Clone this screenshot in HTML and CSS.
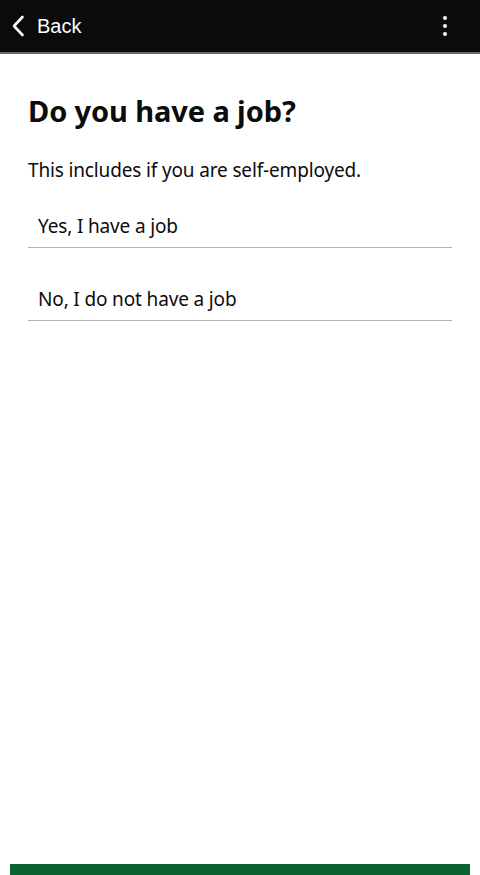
FILE: index.html
```html
<!DOCTYPE html>
<html lang="en-GB">
<head>
  <meta charset="UTF-8">
  <title>Do you have a job?</title>
  <link rel="stylesheet" href="styles.css">
</head>
<body>
  <header class="topbar">
    <a class="back" href="#">
      <svg class="chevron" width="14" height="22" viewBox="0 0 14 22">
        <path d="M11.5 2 L3 11 L11.5 20" fill="none" stroke="#fff" stroke-width="2.6" stroke-linecap="round" stroke-linejoin="round"/>
      </svg>
      <span>Back</span>
    </a>
    <div class="menu">
      <span></span><span></span><span></span>
    </div>
  </header>

  <main class="page">
    <h1>Do you have a job?</h1>
    <p class="hint">This includes if you are self-employed.</p>

    <div class="options">
      <a class="option" href="#">Yes, I have a job</a>
      <a class="option" href="#">No, I do not have a job</a>
    </div>
  </main>

  <div class="footer-bar"></div>
</body>
</html>
```

FILE: styles.css
```css
body {
  margin: 0;
  background: #fff;
  color: #0b0c0c;
  font-family: "Noto Sans", "Liberation Sans", sans-serif;
  min-height: 875px;
  display: flex;
  flex-direction: column;
}

.topbar {
  height: 52px;
  background: #0b0b0b;
  border-bottom: 2px solid #6b6b6b;
  display: flex;
  align-items: center;
  justify-content: space-between;
  padding: 0 33px 0 11px;
}

.back {
  display: flex;
  align-items: center;
  gap: 12px;
  color: #fff;
  text-decoration: none;
  font-family: "Liberation Sans", Arial, sans-serif;
  font-size: 20px;
}

.chevron {
  display: block;
}

.menu {
  display: flex;
  flex-direction: column;
  gap: 4px;
}

.menu span {
  width: 4px;
  height: 4px;
  border-radius: 50%;
  background: #fff;
}

.page {
  flex: 1;
  padding: 0 28px;
}

h1 {
  margin: 40px 0 0;
  font-size: 29px;
  font-weight: 700;
  letter-spacing: -0.1px;
  line-height: 1.2;
}

.hint {
  margin: 29px 0 0;
  font-size: 19px;
  letter-spacing: -0.15px;
  line-height: 1.3;
}

.options {
  margin-top: 17px;
}

.option {
  display: block;
  padding: 15px 10px 8px;
  border-bottom: 1px solid #b1b4b6;
  color: #0b0c0c;
  text-decoration: none;
  font-size: 19px;
  letter-spacing: -0.15px;
  line-height: 1.3;
  margin-bottom: 24px;
}

.footer-bar {
  height: 11px;
  margin: 0 10px;
  background: #0b6130;
}
```
